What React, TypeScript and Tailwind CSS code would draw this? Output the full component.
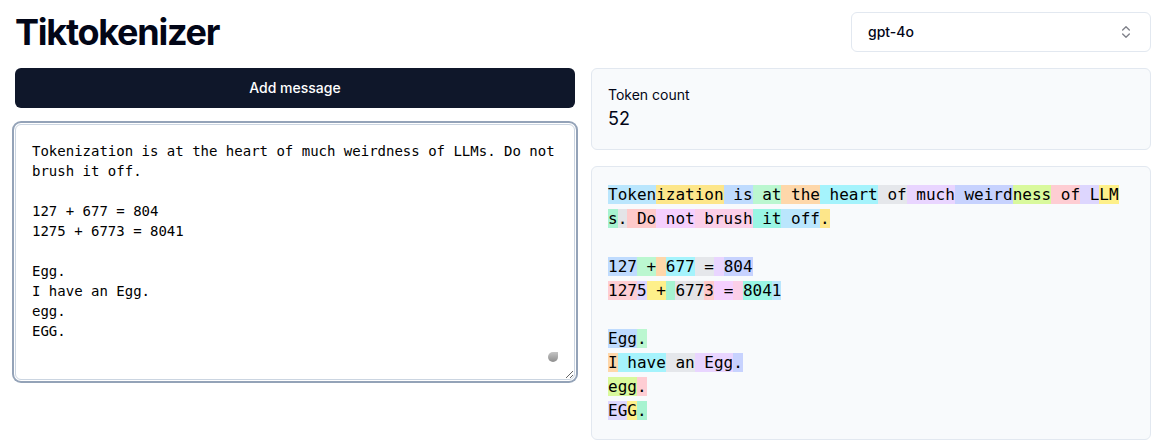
import { ChevronsUpDown } from "lucide-react";

const SOURCE = `Tokenization is at the heart of much weirdness of LLMs. Do not brush it off.

127 + 677 = 804
1275 + 6773 = 8041

Egg.
I have an Egg.
egg.
EGG.`;

const PALETTE = [
  "bg-[#bae6fd]",
  "bg-[#fde68a]",
  "bg-[#bfdbfe]",
  "bg-[#bbf7d0]",
  "bg-[#fed7aa]",
  "bg-[#a5f3fc]",
  "bg-[#e5e7eb]",
  "bg-[#e9d5ff]",
  "bg-[#c7d2fe]",
  "bg-[#d9f99d]",
  "bg-[#fecdd3]",
  "bg-[#ddd6fe]",
  "bg-[#fef08a]",
  "bg-[#a7f3d0]",
  "bg-[#e4e4e7]",
  "bg-[#fecaca]",
  "bg-[#f5d0fe]",
  "bg-[#fbcfe8]",
  "bg-[#99f6e4]",
];

const TOKENS = [
  "Token", "ization", " is", " at", " the", " heart", " of", " much", " weird", "ness", " of", " L", "LM",
  "s", ".", " Do", " not", " brush", " it", " off", ".\n\n",
  "127", " +", " ", "677", " =", " ", "804", "\n",
  "127", "5", " +", " ", "677", "3", " =", " ", "804", "1", "\n\n",
  "Egg", ".\n",
  "I", " have", " an", " Egg", ".\n",
  "egg", ".\n",
  "EG", "G", ".",
];

function TokenView() {
  return (
    <pre className="max-w-[515px] whitespace-pre-wrap break-all font-['DejaVu_Sans_Mono',monospace] text-base leading-6 text-black">
      {TOKENS.map((token, index) => {
        // keep the newline out of the highlight
        const text = token.replace(/\n+$/, "");
        const tail = token.slice(text.length);
        return (
          <span key={index}>
            <span className={PALETTE[index % PALETTE.length]}>{text}</span>
            {tail}
          </span>
        );
      })}
    </pre>
  );
}

export default function App() {
  return (
    <div className="min-h-[445px] bg-white pb-4 pl-[15px] pr-[10px] pt-3 font-['Inter',sans-serif] text-[#020617]">
      <div className="flex h-10 items-center justify-between">
        <h1 className="text-4xl font-bold tracking-[-0.035em]">Tiktokenizer</h1>
        <button className="flex h-10 w-[300px] items-center justify-between rounded-md border border-[#e2e8f0] bg-white px-4 text-sm font-medium">
          gpt-4o
          <ChevronsUpDown className="h-4 w-4 opacity-50" />
        </button>
      </div>

      <div className="mt-4 grid grid-cols-2 gap-4">
        <div className="flex flex-col gap-4">
          <button className="h-10 rounded-md bg-[#0f172a] text-sm font-medium text-white">
            Add message
          </button>
          <div className="relative">
            <textarea
              className="block h-64 w-full resize-y rounded-md border border-[#cbd5e1] bg-white p-4 font-['DejaVu_Sans_Mono',monospace] text-sm leading-5 text-black outline-none ring-2 ring-[#94a3b8] ring-offset-1"
              defaultValue={SOURCE}
              spellCheck={false}
            />
            <div className="absolute bottom-[18px] right-[17px] h-[10px] w-[10px] rounded-full rounded-tr-none bg-gradient-to-b from-[#c4c4c4] to-[#8e8e8e]" />
          </div>
        </div>

        <div className="flex flex-col gap-4">
          <div className="rounded-md border border-[#e2e8f0] bg-[#f8fafc] p-4">
            <p className="text-sm leading-5">Token count</p>
            <p className="text-lg leading-7">52</p>
          </div>
          <div className="rounded-md border border-[#e2e8f0] bg-[#f8fafc] p-4">
            <TokenView />
          </div>
        </div>
      </div>
    </div>
  );
}
